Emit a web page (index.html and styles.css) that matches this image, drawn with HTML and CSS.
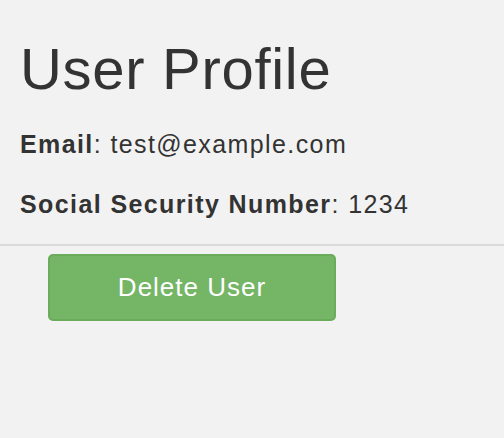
FILE: index.html
```html
<!DOCTYPE html>
<html>
<head>
<meta charset="utf-8">
<link rel="stylesheet" href="styles.css">
</head>
<body>
<main class="profile">
  <h1 class="title">User Profile</h1>
  <p class="field"><strong>Email</strong>: test@example.com</p>
  <p class="field"><strong>Social Security Number</strong>: 1234</p>
</main>
<hr class="divider">
<div class="actions">
  <button class="btn-delete" type="button">Delete User</button>
</div>
</body>
</html>
```
FILE: styles.css
```css
html, body {
  margin: 0;
  padding: 0;
  background: #f2f2f2;
}
body {
  font-family: "Liberation Sans", Arial, sans-serif;
  color: #333333;
}
.profile {
  padding: 37px 20px 0 20px;
}
.title {
  font-size: 58px;
  font-weight: normal;
  line-height: 64px;
  letter-spacing: 0.7px;
  margin: 0 0 28px 0;
}
.field {
  font-size: 25px;
  line-height: 30px;
  letter-spacing: 1.4px;
  margin: 0 0 30px 0;
}
.field strong {
  font-weight: bold;
}
.divider {
  margin: -5px 0 0 0;
  border: 0;
  border-top: 2px solid #dadada;
  height: 0;
}
.actions {
  padding: 8px 0 0 48px;
}
.btn-delete {
  width: 288px;
  height: 67px;
  background: #74b566;
  border: 2px solid #6aab5c;
  border-radius: 5px;
  color: #ffffff;
  font-family: "Liberation Sans", Arial, sans-serif;
  font-size: 26px;
  letter-spacing: 1px;
  padding: 0;
}
```
